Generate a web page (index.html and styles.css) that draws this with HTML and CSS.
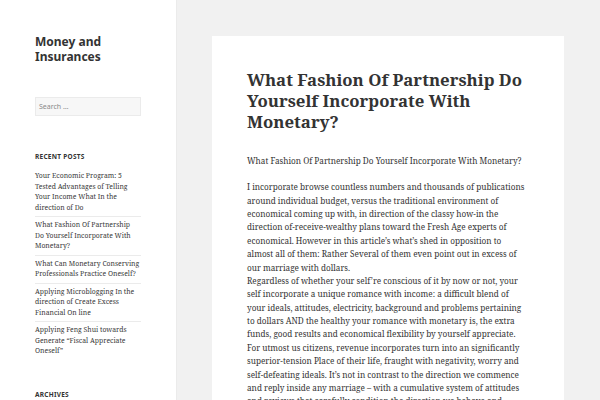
FILE: index.html
```html
<!DOCTYPE html>
<html lang="en">
<head>
<meta charset="utf-8">
<title>Money and Insurances</title>
<link rel="stylesheet" href="styles.css">
</head>
<body>
<div class="page">
  <aside class="sidebar">
    <p class="site-title">Money and Insurances</p>
    <div class="widget widget-search">
      <div class="search-field">Search …</div>
    </div>
    <div class="widget widget-recent">
      <h2 class="widget-title">Recent Posts</h2>
      <ul class="post-list">
        <li>Your Economic Program: 5 Tested Advantages of Telling Your Income What In the direction of Do</li>
        <li>What Fashion Of Partnership Do Yourself Incorporate With Monetary?</li>
        <li>What Can Monetary Conserving Professionals Practice Oneself?</li>
        <li>Applying Microblogging In the direction of Create Excess Financial On line</li>
        <li>Applying Feng Shui towards Generate “Fiscal Appreciate Oneself”</li>
      </ul>
    </div>
    <div class="widget widget-archives">
      <h2 class="widget-title">Archives</h2>
      <ul class="post-list">
        <li>May 2019</li>
      </ul>
    </div>
  </aside>
  <main class="content">
    <article class="card">
      <h1 class="entry-title">What Fashion Of Partnership Do Yourself Incorporate With Monetary?</h1>
      <div class="entry-content">
        <p>What Fashion Of Partnership Do Yourself Incorporate With Monetary?</p>
        <p>I incorporate browse countless numbers and thousands of publications around individual budget, versus the traditional environment of economical coming up with, in direction of the classy how-in the direction of-receive-wealthy plans toward the Fresh Age experts of economical. However in this article’s what’s shed in opposition to almost all of them: Rather Several of them even point out in excess of our marriage with dollars.<br>
        Regardless of whether your self’re conscious of it by now or not, your self incorporate a unique romance with income: a difficult blend of your ideals, attitudes, electricity, background and problems pertaining to dollars AND the healthy your romance with monetary is, the extra funds, good results and economical flexibility by yourself appreciate.<br>
        For utmost us citizens, revenue incorporates turn into an significantly superior-tension Place of their life, fraught with negativity, worry and self-defeating ideals. It’s not in contrast to the direction we commence and reply inside any marriage – with a cumulative system of attitudes and reviews that carefully condition the direction we behave and respond.</p>
      </div>
    </article>
  </main>
</div>
</body>
</html>
```

FILE: styles.css
```css
html, body {
  margin: 0;
  padding: 0;
  height: 400px;
  overflow: hidden;
}
body {
  background: #f1f1f1;
  color: #333;
  font-family: "Noto Serif", "DejaVu Serif", serif;
}
.page {
  display: flex;
  align-items: flex-start;
  min-height: 400px;
}
.sidebar {
  width: 106px;
  flex: 0 0 106px;
  min-height: 400px;
  background: #fff;
  padding: 34px 35px 0;
  box-shadow: 0 0 1px rgba(0, 0, 0, 0.15);
}
.site-title {
  margin: 0;
  font-family: "Noto Sans", sans-serif;
  font-weight: 700;
  font-size: 12px;
  line-height: 15px;
  color: #333;
}
.widget-search {
  margin-top: 33px;
}
.search-field {
  height: 17px;
  border: 1px solid #ebebeb;
  background: #f7f7f7;
  font-family: "Noto Sans", sans-serif;
  font-size: 7px;
  line-height: 17px;
  color: #8a8a8a;
  padding-left: 3px;
}
.widget-recent {
  margin-top: 36px;
}
.widget-archives {
  margin-top: 30px;
}
.widget-title {
  margin: 0 0 10px;
  font-family: "Noto Sans", sans-serif;
  font-weight: 700;
  font-size: 6.5px;
  line-height: 9px;
  letter-spacing: 0.04em;
  text-transform: uppercase;
  color: #333;
}
.post-list {
  list-style: none;
  margin: 0;
  padding: 0;
  font-size: 6.85px;
  line-height: 10.5px;
  color: #3a3a3a;
}
.post-list li {
  border-top: 1px solid #ebebeb;
  padding: 3px 1px 3px 0;
}
.post-list li:first-child {
  border-top: 0;
  padding-top: 0;
}
.content {
  flex: 1;
  padding: 36px 0 0 36px;
}
.card {
  width: 282px;
  background: #fff;
  padding: 33px 35px 40px;
  min-height: 400px;
}
.entry-title {
  margin: 0;
  font-size: 16.8px;
  line-height: 21.2px;
  font-weight: 700;
  color: #333;
}
.entry-content {
  margin-top: 21px;
  font-size: 8.2px;
  line-height: 13.37px;
  color: #333;
}
.entry-content p {
  margin: 0 0 13.37px;
}
```
